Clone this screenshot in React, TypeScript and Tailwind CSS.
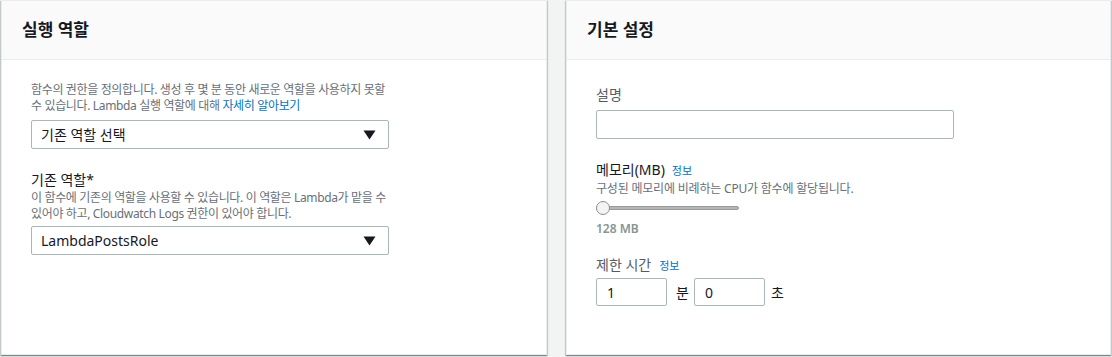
import React from "react";

const font = { fontFamily: '"Noto Sans", "Noto Sans CJK KR", sans-serif' };

function Caret() {
  return (
    <svg width="13" height="10" viewBox="0 0 13 10" className="shrink-0">
      <path d="M0.5 0.5h12L6.5 9.5z" fill="#16191f" />
    </svg>
  );
}

function SelectBox({ value }: { value: string }) {
  return (
    <div className="flex h-[29px] w-[358px] items-center justify-between rounded-[2px] border border-[#aab7b8] bg-white pl-[9px] pr-[12px] text-[14px] text-[#16191f]">
      <span>{value}</span>
      <Caret />
    </div>
  );
}

function Panel({ title, children, className }: { title: string; children: React.ReactNode; className?: string }) {
  return (
    <div
      className={
        "flex h-[355px] flex-col border border-[#eaeded] bg-white shadow-[0_1px_1px_0_rgba(0,28,36,0.3),1px_1px_1px_0_rgba(0,28,36,0.15),-1px_1px_1px_0_rgba(0,28,36,0.15)] " +
        (className ?? "")
      }
    >
      <div className="flex h-[59px] shrink-0 items-center border-b border-[#eaeded] bg-[#fafafa] px-[20px]">
        <h2 className="text-[17px] font-bold text-[#16191f]">{title}</h2>
      </div>
      {children}
    </div>
  );
}

function Info({ className }: { className?: string }) {
  return <span className={"text-[11px] text-[#0073bb] " + (className ?? "")}>정보</span>;
}

export default function App() {
  return (
    <div className="flex h-[357px] w-[1112px] gap-[19px] bg-[#f2f3f3] pl-[1px] pr-[1px]" style={font}>
      <Panel title="실행 역할" className="w-[546px]">
        <div className="px-[29px] pt-[22px]">
          <p className="w-[362px] break-keep text-[12px] leading-[16px] tracking-[-0.35px] text-[#687078]">
            함수의 권한을 정의합니다. 생성 후 몇 분 동안 새로운 역할을 사용하지 못할 수 있습니다. Lambda 실행 역할에 대해{" "}
            <span className="text-[#0073bb]">자세히 알아보기</span>
          </p>
          <div className="mt-[6px]">
            <SelectBox value="기존 역할 선택" />
          </div>
          <div className="mt-[21px] text-[14px] leading-[20px] text-[#16191f]">기존 역할*</div>
          <p className="w-[362px] break-keep text-[12px] leading-[16px] tracking-[-0.35px] text-[#687078]">
            이 함수에 기존의 역할을 사용할 수 있습니다. 이 역할은 Lambda가 맡을 수 있어야 하고, Cloudwatch Logs 권한이 있어야 합니다.
          </p>
          <div className="mt-[4px]">
            <SelectBox value="LambdaPostsRole" />
          </div>
        </div>
      </Panel>

      <Panel title="기본 설정" className="flex-1">
        <div className="px-[29px] pt-[25px]">
          <div className="text-[14px] leading-[20px] text-[#545b64]">설명</div>
          <div className="mt-[5px] h-[29px] w-[358px] rounded-[2px] border border-[#aab7b8] bg-white" />

          <div className="mt-[21px] flex items-baseline gap-[7px] leading-[20px]">
            <span className="text-[14px] text-[#16191f]">메모리(MB)</span>
            <Info />
          </div>
          <p className="text-[12px] leading-[15px] tracking-[-0.2px] text-[#687078]">구성된 메모리에 비례하는 CPU가 함수에 할당됩니다.</p>
          <div className="relative mt-[5px] flex h-[14px] w-[143px] items-center">
            <div className="h-[4px] w-full rounded-full border border-[#9a9a9a] bg-[#b5b5b5]" />
            <div className="absolute left-0 top-0 h-[14px] w-[14px] rounded-full border border-[#8f8f8f] bg-[#f4f4f4]" />
          </div>
          <div className="mt-[6px] text-[12px] font-semibold leading-[15px] text-[#879596]">128 MB</div>

          <div className="mt-[19px] flex items-baseline gap-[8px] leading-[20px]">
            <span className="text-[14px] text-[#545b64]">제한 시간</span>
            <Info />
          </div>
          <div className="mt-[2px] flex items-center text-[14px] text-[#16191f]">
            <div className="flex h-[28px] w-[71px] items-center rounded-[2px] border border-[#aab7b8] pl-[10px]">1</div>
            <span className="ml-[9px] mr-[5px]">분</span>
            <div className="flex h-[28px] w-[71px] items-center rounded-[2px] border border-[#aab7b8] pl-[10px]">0</div>
            <span className="ml-[6px]">초</span>
          </div>
        </div>
      </Panel>
    </div>
  );
}
